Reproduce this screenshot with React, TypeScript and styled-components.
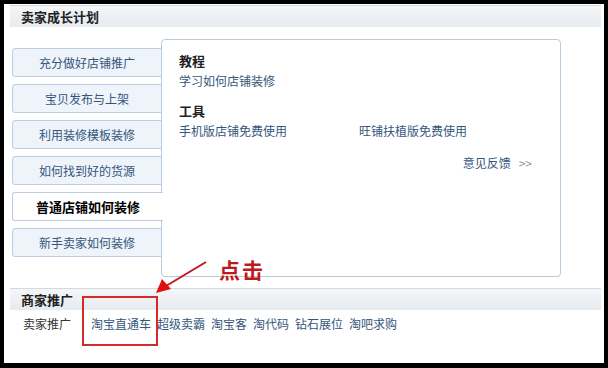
import React, { useState } from 'react'
import styled, { createGlobalStyle } from 'styled-components'

const GlobalStyle = createGlobalStyle`
  html, body { margin: 0; padding: 0; background: #000; }
  body { font-family: "Noto Sans CJK SC", "Liberation Sans", sans-serif; font-size: 12px; }
`

const Frame = styled.div`
  position: relative;
  width: 608px;
  height: 368px;
  box-sizing: border-box;
  border: solid #000;
  border-width: 4px 4px 5px 4px;
  background: #fff;
  padding: 1px 3px 0 6px;
  overflow: hidden;
`

const SectionHeader = styled.div`
  height: 22px;
  box-sizing: border-box;
  border-top: 1px solid #d3d9df;
  background: linear-gradient(#f4f6f8, #e6ebf0);
  padding-left: 11px;
  display: flex;
  align-items: center;
  font-size: 13px;
  font-weight: bold;
  color: #222;
`

const Growth = styled.div`
  display: flex;
  margin: 12px 0 0 2px;
  height: 238px;
`

const TabList = styled.div`
  width: 150px;
  padding-top: 9px;
  display: flex;
  flex-direction: column;
  gap: 7px;
  position: relative;
  z-index: 1;
`

const Tab = styled.div<{ active?: boolean }>`
  height: 29px;
  box-sizing: border-box;
  border: 1px solid #bccee0;
  border-right: ${(p) => (p.active ? 'none' : '1px solid #bccee0')};
  border-radius: 3px 0 0 3px;
  background: ${(p) => (p.active ? '#fff' : '#eef4fa')};
  width: ${(p) => (p.active ? '151px' : '150px')};
  display: flex;
  align-items: center;
  justify-content: center;
  font-size: ${(p) => (p.active ? '13px' : '12px')};
  font-weight: ${(p) => (p.active ? 'bold' : 'normal')};
  color: ${(p) => (p.active ? '#000' : '#35567c')};
  cursor: pointer;
`

const Panel = styled.div`
  width: 400px;
  margin-left: -1px;
  box-sizing: border-box;
  border: 1px solid #b9cbdc;
  border-radius: 4px;
  padding: 11px 28px 0 17px;
`

const Title = styled.div`
  font-size: 13px;
  font-weight: bold;
  color: #222;
  line-height: 20px;
`

const LinkRow = styled.div`
  display: grid;
  grid-template-columns: 180px auto;
  line-height: 20px;
`

const Group = styled.div<{ space?: number }>`
  margin-top: ${(p) => p.space || 0}px;
`

const Link = styled.a`
  color: #35567c;
  text-decoration: none;
  font-size: 12px;
  cursor: pointer;
`

const Feedback = styled.div`
  margin-top: 12px;
  line-height: 20px;
  text-align: right;
  color: #35567c;
`

const Arrows = styled.span`
  color: #8a98a8;
  margin-left: 8px;
`

const PromoHeader = styled(SectionHeader)`
  margin-top: 11px;
`

const PromoRow = styled.div`
  display: flex;
  align-items: center;
  padding-left: 13px;
  height: 26px;
  gap: 6px;
`

const PromoLabel = styled.span`
  width: 62px;
  color: #333;
`

const Callout = styled.div`
  position: absolute;
  left: 78px;
  top: 292px;
  width: 76px;
  height: 50px;
  box-sizing: border-box;
  border: 2px solid #d42a2a;
`

const ClickNote = styled.span`
  position: absolute;
  left: 215px;
  top: 250px;
  font-family: "Noto Sans CJK SC", "DejaVu Serif", serif;
  font-size: 21px;
  font-weight: bold;
  color: #bd1a1e;
  letter-spacing: 2px;
`

const ArrowSvg = styled.svg`
  position: absolute;
  left: 0;
  top: 0;
  pointer-events: none;
`

const tabs = ['充分做好店铺推广', '宝贝发布与上架', '利用装修模板装修', '如何找到好的货源', '普通店铺如何装修', '新手卖家如何装修']
const promos = ['淘宝直通车', '超级卖霸', '淘宝客', '淘代码', '钻石展位', '淘吧求购']

export default function App() {
  const [active, setActive] = useState<number>(4)
  return (
    <Frame>
      <GlobalStyle />
      <SectionHeader>卖家成长计划</SectionHeader>
      <Growth>
        <TabList>
          {tabs.map((t, i) => (
            <Tab key={t} active={i === active} onClick={() => setActive(i)}>{t}</Tab>
          ))}
        </TabList>
        <Panel>
          <Group>
            <Title>教程</Title>
            <LinkRow><Link>学习如何店铺装修</Link></LinkRow>
          </Group>
          <Group space={10}>
            <Title>工具</Title>
            <LinkRow>
              <Link>手机版店铺免费使用</Link>
              <Link>旺铺扶植版免费使用</Link>
            </LinkRow>
          </Group>
          <Feedback>意见反馈<Arrows>&gt;&gt;</Arrows></Feedback>
        </Panel>
      </Growth>
      <PromoHeader>商家推广</PromoHeader>
      <PromoRow>
        <PromoLabel>卖家推广</PromoLabel>
        {promos.map((p) => (
          <Link key={p}>{p}</Link>
        ))}
      </PromoRow>

      {/* annotation overlay */}
      <Callout />
      <ClickNote>点击</ClickNote>
      <ArrowSvg width="600" height="360">
        <line x1="202" y1="258" x2="162" y2="282" stroke="#c4161c" strokeWidth="2" />
        <polygon points="152,289 158,275 167,285" fill="#e01010" />
      </ArrowSvg>
    </Frame>
  )
}
